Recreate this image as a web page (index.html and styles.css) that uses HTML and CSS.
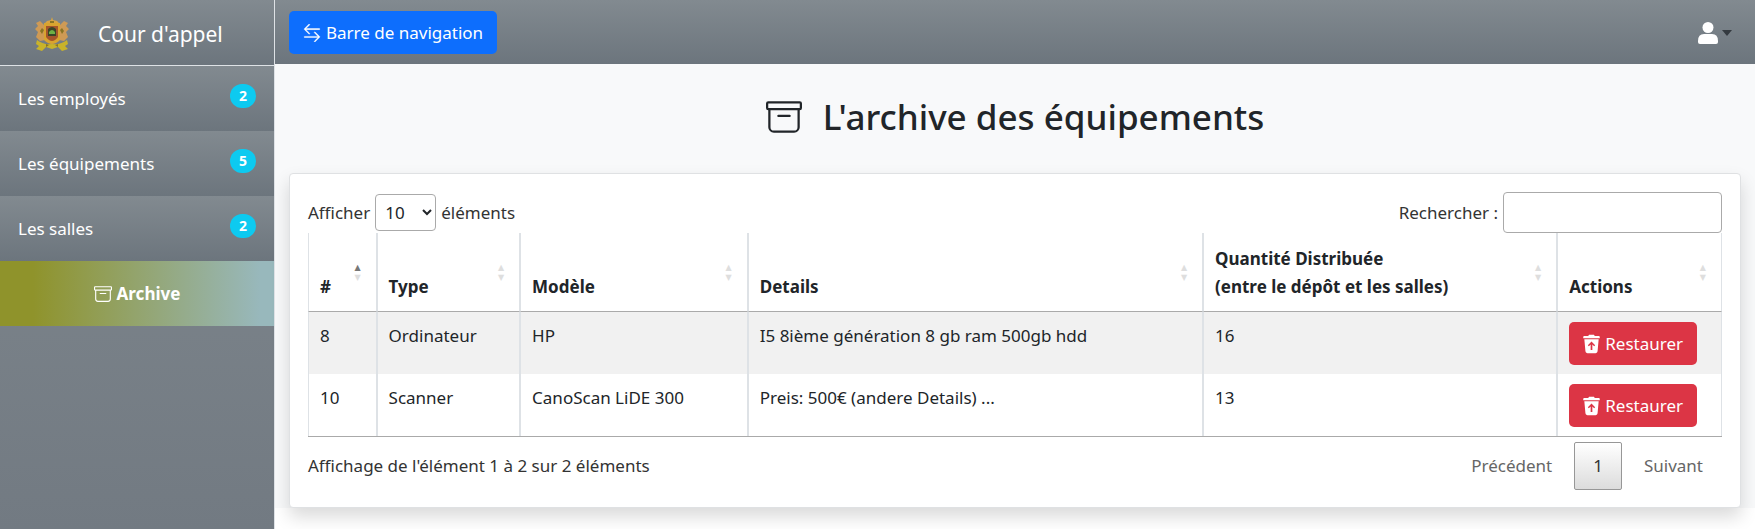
FILE: index.html
```html
<!DOCTYPE html>
<html lang="fr">
<head>
<meta charset="utf-8">
<meta name="viewport" content="width=device-width, initial-scale=1">
<title>Cour d'appel - Archive des équipements</title>
<link rel="stylesheet" href="styles.css">
</head>
<body>
<svg class="sprite" aria-hidden="true">
  <symbol id="i-archive" viewBox="0 0 16 16"><path d="M0 2a1 1 0 0 1 1-1h14a1 1 0 0 1 1 1v2a1 1 0 0 1-1 1v7.500a2.500 2.500 0 0 1-2.500 2.500h-9A2.500 2.500 0 0 1 1 12.500V5a1 1 0 0 1-1-1V2zm2 3v7.500A1.500 1.500 0 0 0 3.500 14h9a1.500 1.500 0 0 0 1.500-1.500V5H2zm13-3H1v2h14V2zM5 7.500a.5.5 0 0 1 .5-.5h5a.5.5 0 0 1 0 1h-5a.5.5 0 0 1-.5-.5z"/></symbol>
  <symbol id="i-swap" viewBox="0 0 16 16"><path stroke="currentColor" stroke-width=".35" fill-rule="evenodd" d="M1 11.500a.5.5 0 0 0 .5.5h11.793l-3.147 3.146a.5.5 0 0 0 .708.708l4-4a.5.5 0 0 0 0-.708l-4-4a.5.5 0 0 0-.708.708L13.293 11H1.500a.5.5 0 0 0-.5.5zm14-7a.5.5 0 0 1-.5.5H2.707l3.147 3.146a.5.5 0 1 1-.708.708l-4-4a.5.5 0 0 1 0-.708l4-4a.5.5 0 1 1 .708.708L2.707 4H14.500a.5.5 0 0 1 .5.5z"/></symbol>
  <symbol id="i-restore" viewBox="1 .3 14 15.500"><path fill-rule="evenodd" d="M6 .5 5.300 1.500H2a.8.8 0 0 0-.8.8V3.300h13.600V2.300a.8.8 0 0 0-.8-.8h-3.300L10 .5zM2.100 4.100l.9 10a1.600 1.600 0 0 0 1.600 1.500h6.800a1.600 1.600 0 0 0 1.600-1.500l.9-10zM8 5.900l3 3.200-.8.800-1.500-1.400V13H7.300V8.500L5.800 9.900 5 9.100z"/></symbol>
</svg>
<div class="layout">
  <nav class="sidebar" aria-label="Menu principal">
    <a class="brand" href="#">
      <svg class="emblem" viewBox="0 0 34 34" aria-hidden="true">
        <path fill="#d9a441" d="M17 0l1 3 4 1 3 3h-16l3-3 4-1z"/>
        <path fill="#cf9a55" d="M9 8 5 4 1 6l2 3-3 3 3 3-2 5 4 4 5-1zM25 8l4-4 4 2-2 3 3 3-3 3 2 5-4 4-5-1z"/>
        <path fill="#c9b32a" d="M2 23q6 5 15 4 9 1 15-4l1 4-3 2 3 3-6 2-4-4-6 2-6-2-4 4-6-2 3-3-3-2z"/>
        <path fill="#d9a42f" d="M9 6h16v17q-4 4-8 4t-8-4z"/>
        <path fill="#a5552b" d="M11 9h12v11q-3 4-6 4t-6-4z"/>
        <path fill="#3a4626" d="M13 12q4-4 8 0v7h-8z"/>
        <path fill="#6fb044" d="M14 15q3-4 6 0v2h-6z"/>
        <path fill="#8a7423" d="M7 11l2 2-2 4-2-3zM27 11l-2 2 2 4 2-3zM11 27l3 1-3 2zM23 27l-3 1 3 2zM15 4h4v2h-4z"/>
      </svg>
      <span>Cour d'appel</span>
    </a>
    <a class="item" href="#">Les employés <span class="badge">2</span></a>
    <a class="item" href="#">Les équipements <span class="badge">5</span></a>
    <a class="item" href="#">Les salles <span class="badge">2</span></a>
    <a class="item active" href="#"><svg class="icon" aria-hidden="true"><use href="#i-archive"/></svg>Archive</a>
  </nav>
  <div class="page">
    <header class="topbar">
      <button class="btn primary" type="button"><svg class="icon" aria-hidden="true"><use href="#i-swap"/></svg>Barre de navigation</button>
      <button class="user" type="button" aria-label="Compte">
        <svg class="person" viewBox="0 0 20 22" aria-hidden="true"><circle cx="10" cy="5.500" r="5.500"/><path d="M0 19q0-7 6-7h8q6 0 6 7v1q0 2-2 2H2q-2 0-2-2z"/></svg>
        <span class="caret"></span>
      </button>
    </header>
    <main class="content">
      <h1 class="title"><svg class="title-icon" aria-hidden="true"><use href="#i-archive"/></svg>L'archive des équipements</h1>
      <section class="card">
        <div class="tools">
          <div class="field"><label for="length">Afficher</label>
            <select id="length" class="length"><option>10</option><option>25</option><option>50</option></select>
            <span>éléments</span></div>
          <div class="field"><label for="search">Rechercher :</label><input id="search" class="search" type="search"></div>
        </div>
        <table class="grid">
          <colgroup><col class="c-id"><col class="c-type"><col class="c-model"><col class="c-details"><col class="c-qty"><col class="c-actions"></colgroup>
          <thead>
            <tr><th class="sorted" scope="col">#</th><th scope="col">Type</th><th scope="col">Modèle</th><th scope="col">Details</th><th scope="col">Quantité Distribuée<br>(entre le dépôt et les salles)</th><th scope="col">Actions</th></tr>
          </thead>
          <tbody>
            <tr><td>8</td><td>Ordinateur</td><td>HP</td><td>I5 8ième génération 8 gb ram 500gb hdd</td><td>16</td><td><button class="btn danger" type="button"><svg class="bin" aria-hidden="true"><use href="#i-restore"/></svg>Restaurer</button></td></tr>
            <tr><td>10</td><td>Scanner</td><td>CanoScan LiDE 300</td><td>Preis: 500€ (andere Details) ...</td><td>13</td><td><button class="btn danger" type="button"><svg class="bin" aria-hidden="true"><use href="#i-restore"/></svg>Restaurer</button></td></tr>
          </tbody>
        </table>
        <div class="footer">
          <div>Affichage de l'élément 1 à 2 sur 2 éléments</div>
          <nav class="pager" aria-label="Pagination"><a class="muted" href="#">Précédent</a><a class="current" href="#">1</a><a class="muted" href="#">Suivant</a></nav>
        </div>
      </section>
    </main>
  </div>
</div>
</body>
</html>
```
FILE: styles.css
```css
* { box-sizing: border-box; }
body {
  margin: 0;
  background: #fff;
  color: #212529;
  font-family: "Segoe UI", "Noto Sans", sans-serif;
  font-size: 17px;
  line-height: 28px;
}
a { color: inherit; text-decoration: none; }
button, select, input { font: inherit; }
.sprite { display: none; }
.icon { width: 18px; height: 18px; fill: currentColor; flex: none; }
.bin { width: 17px; height: 20px; fill: currentColor; flex: none; }

.layout { display: flex; min-height: 100vh; }
.sidebar {
  flex: none;
  width: 275px;
  border-right: 1px solid #dee2e6;
  background: linear-gradient(#828a90, #727a82);
  color: #fff;
}
.brand {
  display: flex;
  align-items: center;
  gap: 29px;
  height: 66px;
  padding: 3px 35px 0;
  border-bottom: 1px solid #dee2e6;
  background: linear-gradient(#828a90, #6c757d);
  font-size: 21px;
}
.emblem { width: 34px; height: 34px; flex: none; }
.item {
  display: flex;
  justify-content: space-between;
  align-items: center;
  height: 65px;
  padding: 0 18px;
  background: linear-gradient(#828a90, #6c757d);
}
.badge {
  min-width: 26px;
  margin-bottom: 5px;
  padding: 0 8px;
  border-radius: 12px;
  background: #0dcaf0;
  font-size: 14px;
  font-weight: 700;
  line-height: 24px;
  text-align: center;
}
.active {
  justify-content: center;
  gap: 5px;
  background: linear-gradient(90deg, #8f932b 12%, #98b8bc 95%);
  font-weight: 700;
}

.page { flex: 1; min-width: 0; }
.topbar {
  display: flex;
  align-items: center;
  justify-content: space-between;
  height: 64px;
  padding: 1px 23px 0 14px;
  background: linear-gradient(#828a90, #6c757d);
}
.btn {
  display: inline-flex;
  align-items: center;
  gap: 5px;
  height: 43px;
  padding: 0 14px;
  border: 0;
  border-radius: 5px;
  color: #fff;
  white-space: nowrap;
}
.primary { background: #0d6efd; }
.danger { background: #dc3545; }
.user { display: flex; align-items: center; gap: 4px; padding: 0; border: 0; background: none; }
.person { width: 20px; height: 22px; fill: #fff; }
.caret { border: 5px solid transparent; border-top: 6px solid #343a40; border-bottom: 0; }

.content { padding: 0 14px; background: #f8f9fa; }
.title {
  display: flex;
  justify-content: center;
  align-items: center;
  gap: 21px;
  height: 109px;
  margin: 0;
  padding-bottom: 4px;
  font-size: 35px;
  font-weight: 500;
}
.title-icon { width: 36px; height: 36px; fill: currentColor; }
.card {
  padding: 18px 18px 17px;
  border: 1px solid #dfe1e3;
  border-radius: 4px;
  background: #fff;
  box-shadow: 0 9px 18px rgba(0, 0, 0, .15);
}
.tools { display: flex; justify-content: space-between; color: #333; }
.field { display: flex; align-items: center; gap: 5px; }
.length { width: 61px; height: 37px; padding: 0 5px; border: 1px solid #aaa; border-radius: 4px; background: #fff; color: #212529; }
.search { width: 219px; height: 41px; border: 1px solid #aaa; border-radius: 4px; background: #fff; }

.grid { width: 100%; table-layout: fixed; border-collapse: separate; border-spacing: 0; border-bottom: 1px solid #aaa; }
.c-id { width: 4.85%; }
.c-type { width: 10.15%; }
.c-model { width: 16.1%; }
.c-details { width: 32.2%; }
.c-qty { width: 25.05%; }
.c-actions { width: 11.65%; }
.grid th, .grid td { text-align: left; border: 0 solid #dee2e6; border-width: 0 1px; }
.grid th {
  position: relative;
  padding: 12px 11px 10px;
  border-bottom: 1px solid #aaa;
  vertical-align: bottom;
  font-weight: 700;
}
.grid th::before, .grid th::after {
  content: "▲";
  position: absolute;
  right: 15px;
  top: 50%;
  margin-top: -8px;
  color: #dedede;
  font: 8px/8px "DejaVu Sans", sans-serif;
}
.grid th::after { content: "▼"; margin-top: 2px; }
.grid .sorted::before { color: #777; }
.grid td { height: 62px; padding: 10px 11px 9px; vertical-align: top; }
.grid tbody tr:nth-child(odd) { background: #f1f1f1; }

.footer { display: flex; justify-content: space-between; padding-top: 5px; color: #333; }
.footer > div { padding-top: 10px; }
.pager { display: flex; gap: 3px; line-height: 46px; }
.pager a { padding: 0 18px; border: 1px solid transparent; border-radius: 2px; }
.pager .muted { color: #666; }
.pager .current { border-color: #979797; background: linear-gradient(#fff, #dcdcdc); }
```
